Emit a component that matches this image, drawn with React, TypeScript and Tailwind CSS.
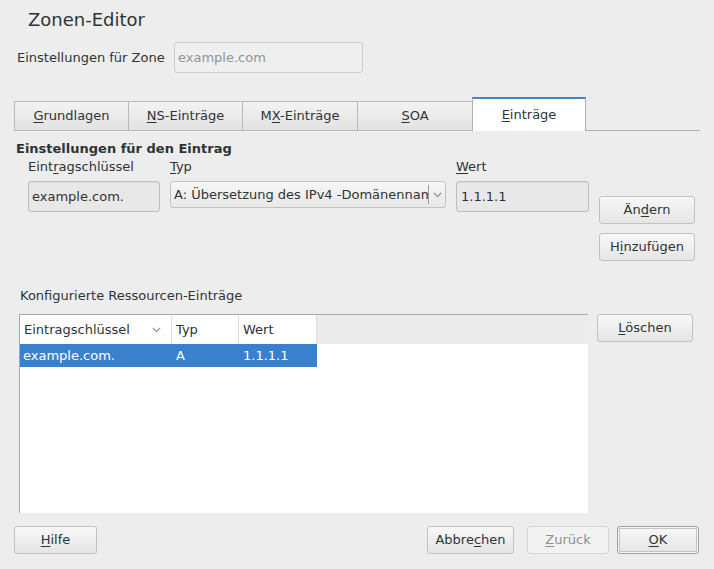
import React from "react";

function M({ children }: { children: React.ReactNode }) {
  return <span className="underline decoration-1 underline-offset-[2px]">{children}</span>;
}

function Btn({
  children,
  className = "",
  disabled = false,
  isDefault = false,
}: {
  children: React.ReactNode;
  className?: string;
  disabled?: boolean;
  isDefault?: boolean;
}) {
  let look =
    "border-[#c2c2c2] bg-linear-to-b from-[#f8f8f8] to-[#e5e5e5] text-[#2e3436]";
  if (disabled) look = "border-[#d3d3d3] bg-[#f2f2f2] text-[#8d9091]";
  if (isDefault)
    look =
      "border-[#a3a3a3] bg-linear-to-b from-[#f8f8f8] to-[#e5e5e5] text-[#2e3436] shadow-[inset_0_0_0_1px_#f4f4f4,inset_0_0_0_2px_#c4c4c4]";
  return (
    <div
      className={`flex items-center justify-center rounded-[3px] border ${look} ${className}`}
    >
      {children}
    </div>
  );
}

function Chevron() {
  return (
    <svg width="9" height="6" viewBox="0 0 9 6" className="block">
      <path d="M0.8 0.8 L4.5 4.6 L8.2 0.8" fill="none" stroke="#8a8d8e" strokeWidth="1.2" />
    </svg>
  );
}

export default function App() {
  return (
    <div className="w-[714px] h-[569px] overflow-hidden bg-[#ededed] text-[#2e3436] text-[13px] leading-4 font-['DejaVu_Sans',sans-serif] flex flex-col">
      {/* Title */}
      <div className="mt-[9px] ml-[28px] text-[18px] leading-[22px]">Zonen-Editor</div>

      {/* Zone row */}
      <div className="mt-[11px] flex items-center h-[31px]">
        <div className="w-[174px] pl-[17px] whitespace-nowrap">Einstellungen für Zone</div>
        <div className="w-[189px] h-[31px] rounded-[3px] border border-[#cdcdcd] bg-[#efefef] flex items-center pl-[3px] text-[#929596]">
          example.com
        </div>
      </div>

      {/* Tabs */}
      <div className="mt-[24px] ml-[14px] h-[34px] flex items-end">
        <div className="w-[114px] h-[30px] border-t border-l border-b border-[#b9b9b9] bg-linear-to-b from-[#f3f3f3] to-[#e2e2e2] flex items-center justify-center">
          <span><M>G</M>rundlagen</span>
        </div>
        <div className="w-[114px] h-[30px] border-t border-l border-b border-[#b9b9b9] bg-linear-to-b from-[#f3f3f3] to-[#e2e2e2] flex items-center justify-center">
          <span><M>N</M>S-Einträge</span>
        </div>
        <div className="w-[115px] h-[30px] border-t border-l border-b border-[#b9b9b9] bg-linear-to-b from-[#f3f3f3] to-[#e2e2e2] flex items-center justify-center">
          <span>M<M>X</M>-Einträge</span>
        </div>
        <div className="w-[115px] h-[30px] border-t border-l border-b border-[#b9b9b9] bg-linear-to-b from-[#f3f3f3] to-[#e2e2e2] flex items-center justify-center">
          <span><M>S</M>OA</span>
        </div>
        <div className="w-[114px] h-[34px] border-l border-r border-[#b0b0b0] border-t-2 border-t-[#3d86d6] bg-white flex items-center justify-center pb-[1px]">
          <span><M>E</M>inträge</span>
        </div>
        <div className="w-[114px] h-[1px] bg-[#b0b0b0]" />
      </div>

      {/* Section title */}
      <div className="mt-[10px] ml-[16px] font-bold">Einstellungen für den Eintrag</div>

      {/* Fields + buttons */}
      <div className="mt-[2px] flex">
        <div className="ml-[28px] w-[132px] flex flex-col">
          <div className="h-4 whitespace-nowrap">Eint<M>r</M>agschlüssel</div>
          <div className="mt-[6px] h-[31px] rounded-[3px] border border-[#bebebe] bg-[#e8e8e8] shadow-[inset_0_1px_1px_rgba(0,0,0,0.05)] flex items-center pl-[3px]">
            example.com.
          </div>
        </div>
        <div className="ml-[10px] w-[276px] flex flex-col">
          <div className="h-4"><M>T</M>yp</div>
          <div className="mt-[6px] h-[27px] rounded-[3px] border border-[#c3c3c3] bg-linear-to-b from-[#f7f7f7] to-[#e8e8e8] flex items-center">
            <div className="flex-1 overflow-hidden whitespace-nowrap pl-[3px]">
              A: Übersetzung des IPv4 -Domänennamens
            </div>
            <div className="w-px h-[19px] bg-[#9c9c9c]" />
            <div className="w-[16px] flex justify-center">
              <Chevron />
            </div>
          </div>
        </div>
        <div className="ml-[10px] w-[133px] flex flex-col">
          <div className="h-4"><M>W</M>ert</div>
          <div className="mt-[6px] h-[31px] rounded-[3px] border border-[#bebebe] bg-[#e8e8e8] shadow-[inset_0_1px_1px_rgba(0,0,0,0.05)] flex items-center pl-[4px]">
            1.1.1.1
          </div>
        </div>
        <div className="ml-[10px] w-[96px] pt-[37px] flex flex-col">
          <Btn className="h-[28px]"><span>Än<M>d</M>ern</span></Btn>
          <Btn className="h-[28px] mt-[9px]"><span>H<M>i</M>nzufügen</span></Btn>
        </div>
      </div>

      {/* Table label */}
      <div className="mt-[27px] ml-[20px]">Konfigurierte Ressourcen-Einträge</div>

      {/* Table + Löschen */}
      <div className="mt-[10px] flex">
        <div className="ml-[19px] w-[569px] h-[199px] border-t border-l border-[#a9a9a9] bg-white flex flex-col">
          <div className="h-[29px] flex">
            <div className="w-[152px] border-r border-[#dedede] flex items-center pl-[4px] pr-[10px]">
              <span className="flex-1">Eintragschlüssel</span>
              <Chevron />
            </div>
            <div className="w-[67px] border-r border-[#dedede] flex items-center pl-[4px]">Typ</div>
            <div className="w-[78px] border-r border-[#dedede] flex items-center pl-[4px]">Wert</div>
            <div className="flex-1 bg-[#ececec]" />
          </div>
          <div className="h-[23px] w-[297px] bg-[#3b80cd] text-white flex items-center">
            <div className="w-[152px] pl-[3px]">example.com.</div>
            <div className="w-[67px] pl-[4px]">A</div>
            <div className="w-[78px] pl-[4px]">1.1.1.1</div>
          </div>
        </div>
        <Btn className="ml-[9px] w-[96px] h-[28px]"><span><M>L</M>öschen</span></Btn>
      </div>

      {/* Bottom buttons */}
      <div className="mt-[13px] flex">
        <Btn className="ml-[14px] w-[83px] h-[28px]"><span><M>H</M>ilfe</span></Btn>
        <Btn className="ml-[330px] w-[87px] h-[28px]"><span>Abbre<M>c</M>hen</span></Btn>
        <Btn className="ml-[13px] w-[82px] h-[28px]" disabled><span><M>Z</M>urück</span></Btn>
        <Btn className="ml-[8px] w-[82px] h-[28px]" isDefault><span><M>O</M>K</span></Btn>
      </div>
    </div>
  );
}
